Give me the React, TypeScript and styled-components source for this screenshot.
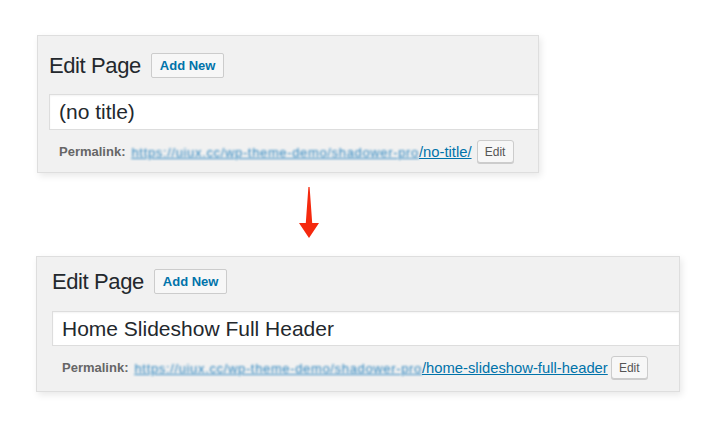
import React from "react";
import styled, { createGlobalStyle } from "styled-components";

const Global = createGlobalStyle`
  html, body { margin: 0; padding: 0; background: #ffffff; }
  body { font-family: "Liberation Sans", Arial, sans-serif; }
  * { box-sizing: border-box; }
`;

const Page = styled.div`
  width: 717px;
  height: 436px;
  display: flex;
  flex-direction: column;
  align-items: flex-start;
  padding-top: 35px;
  overflow: hidden;
`;

const Panel = styled.section<{ $left: number; $width: number; $height: number; $padL: number; $padT: number; $padB: number }>`
  margin-left: ${(p) => p.$left}px;
  width: ${(p) => p.$width}px;
  height: ${(p) => p.$height}px;
  background: #f1f1f1;
  border: 1px solid #dedede;
  box-shadow: 2px 3px 7px rgba(0, 0, 0, 0.09);
  padding: ${(p) => p.$padT}px 0 ${(p) => p.$padB}px ${(p) => p.$padL}px;
  display: flex;
  flex-direction: column;
`;

const HeaderRow = styled.div`
  display: flex;
  align-items: center;
  gap: 10px;
  height: 25px;
`;

const Title = styled.h1`
  margin: 0;
  font-family: "Liberation Sans", Arial, sans-serif;
  font-weight: 400;
  font-size: 22px;
  letter-spacing: -0.4px;
  color: #23282d;
  line-height: 25px;
`;

const AddNew = styled.button`
  height: 25px;
  padding: 0 8px;
  border: 1px solid #cccccc;
  border-radius: 2px;
  background: #f7f7f7;
  color: #0073aa;
  font-family: "Liberation Sans", Arial, sans-serif;
  font-weight: 700;
  font-size: 13px;
  line-height: 23px;
`;

const TitleInput = styled.div<{ $top: number }>`
  margin-top: ${(p) => p.$top}px;
  height: 37px;
  background: #ffffff;
  border: 1px solid #dddddd;
  border-right: none;
  box-shadow: inset 0 1px 2px rgba(0, 0, 0, 0.05);
  padding-left: 9px;
  display: flex;
  align-items: center;
  font-family: "Liberation Sans", Arial, sans-serif;
  font-size: 21px;
  color: #23282d;
`;

const PermaRow = styled.div<{ $padL: number }>`
  margin-top: 10px;
  padding-left: ${(p) => p.$padL}px;
  display: flex;
  align-items: center;
  height: 23px;
  font-family: "Liberation Sans", Arial, sans-serif;
`;

const PermaLabel = styled.strong`
  font-size: 13px;
  font-weight: 700;
  color: #666666;
  margin-right: 6px;
`;

const Link = styled.a`
  font-size: 14.8px;
  color: #0073aa;
  text-decoration: underline;
  display: flex;
  align-items: baseline;
  white-space: nowrap;
`;

const Blurred = styled.span`
  display: inline-block;
  font-size: 13px;
  letter-spacing: 0.65px;
  white-space: nowrap;
  color: #2f86bf;
  text-decoration: underline;
  filter: blur(0.9px);
`;

const EditBtn = styled.button<{ $gap: number }>`
  margin-left: ${(p) => p.$gap}px;
  height: 23px;
  width: 37px;
  padding: 0;
  border: 1px solid #cccccc;
  border-radius: 3px;
  background: #f7f7f7;
  box-shadow: 0 1px 0 #cccccc;
  color: #555555;
  font-family: "Liberation Sans", Arial, sans-serif;
  font-size: 12px;
`;

const ArrowWrap = styled.div`
  margin-left: 298px;
  margin-top: 14px;
  margin-bottom: 18px;
  width: 22px;
  height: 51px;
`;

const Arrow = () => (
  <ArrowWrap>
    <svg width="22" height="51" viewBox="0 0 22 51">
      <path d="M10.4 0 L11.6 0 L14.2 36 L21 36 L11 51 L1 36 L7.8 36 Z" fill="#f5290e" />
    </svg>
  </ArrowWrap>
);

const URL_PREFIX = "https://uiux.cc/wp-theme-demo/shadower-pro";

export default function App() {
  return (
    <>
      <Global />
      <Page>
        <Panel $left={37} $width={502} $height={138} $padL={11} $padT={17} $padB={9}>
          <HeaderRow>
            <Title>Edit Page</Title>
            <AddNew>Add New</AddNew>
          </HeaderRow>
          <TitleInput $top={16}>(no title)</TitleInput>
          <PermaRow $padL={10}>
            <PermaLabel>Permalink:</PermaLabel>
            <Link>
              <Blurred>{URL_PREFIX}</Blurred>
              /no-title/
            </Link>
            <EditBtn $gap={5}>Edit</EditBtn>
          </PermaRow>
        </Panel>
        <Arrow />
        <Panel $left={36} $width={644} $height={136} $padL={15} $padT={12} $padB={12}>
          <HeaderRow>
            <Title>Edit Page</Title>
            <AddNew>Add New</AddNew>
          </HeaderRow>
          <TitleInput $top={17}>Home Slideshow Full Header</TitleInput>
          <PermaRow $padL={10}>
            <PermaLabel>Permalink:</PermaLabel>
            <Link>
              <Blurred>{URL_PREFIX}</Blurred>
              /home-slideshow-full-header
            </Link>
            <EditBtn $gap={3}>Edit</EditBtn>
          </PermaRow>
        </Panel>
      </Page>
    </>
  );
}
